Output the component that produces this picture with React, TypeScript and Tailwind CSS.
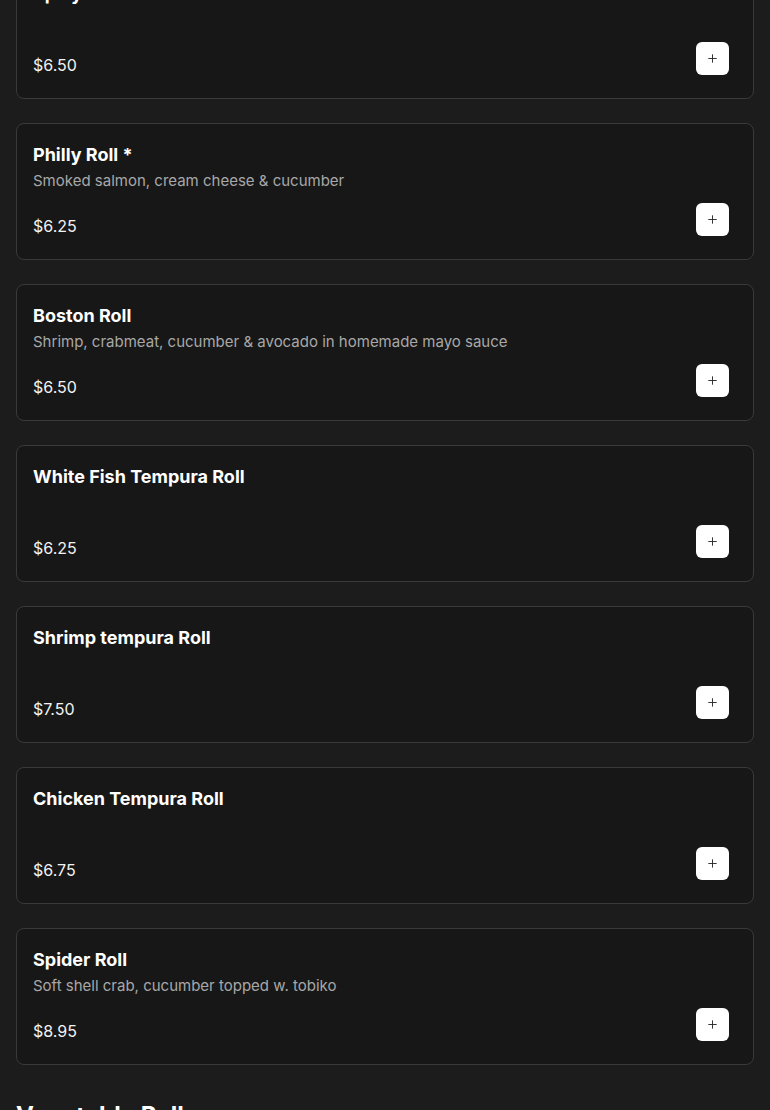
import { Plus } from "lucide-react"

interface Roll {
    name: string
    desc?: string
    price: string
}

const rolls: Roll[] = [
    { name: "Spicy Tuna Roll", price: "$6.50" },
    { name: "Philly Roll *", desc: "Smoked salmon, cream cheese & cucumber", price: "$6.25" },
    { name: "Boston Roll", desc: "Shrimp, crabmeat, cucumber & avocado in homemade mayo sauce", price: "$6.50" },
    { name: "White Fish Tempura Roll", price: "$6.25" },
    { name: "Shrimp tempura Roll", price: "$7.50" },
    { name: "Chicken Tempura Roll", price: "$6.75" },
    { name: "Spider Roll", desc: "Soft shell crab, cucumber topped w. tobiko", price: "$8.95" },
]

function RollCard({ roll }: { roll: Roll }) {
    return (
        <div className="flex h-[137px] flex-col rounded-lg border border-[#3a3a3a] bg-[#171717] pl-4 pr-6 pt-[19px] pb-[21px]">
            <div className="flex flex-col">
                <h3 className="text-[18px] font-bold leading-6 text-white">{roll.name}</h3>
                {roll.desc && (
                    <p className="mt-[3px] text-[15px] leading-[22px] text-[#a8a8a8]">{roll.desc}</p>
                )}
            </div>
            <div className="mt-auto flex items-start justify-between">
                <span className="pt-[11px] text-base leading-6 text-[#f2f2f2]">{roll.price}</span>
                <button className="flex size-[33px] items-center justify-center rounded-md bg-white text-[#2a2a2a]">
                    <Plus size={13} strokeWidth={1.75} />
                </button>
            </div>
        </div>
    )
}

export default function App() {
    return (
        <div className="h-[1110px] overflow-hidden bg-[#1c1c1c] px-4 font-['Inter',sans-serif]">
            <div className="-mt-[38px] flex flex-col gap-6">
                {rolls.map((roll) => (
                    <RollCard key={roll.name} roll={roll} />
                ))}
            </div>
            <h2 className="mt-[35px] text-2xl font-bold leading-8 text-white">Vegetable Rolls</h2>
        </div>
    )
}
